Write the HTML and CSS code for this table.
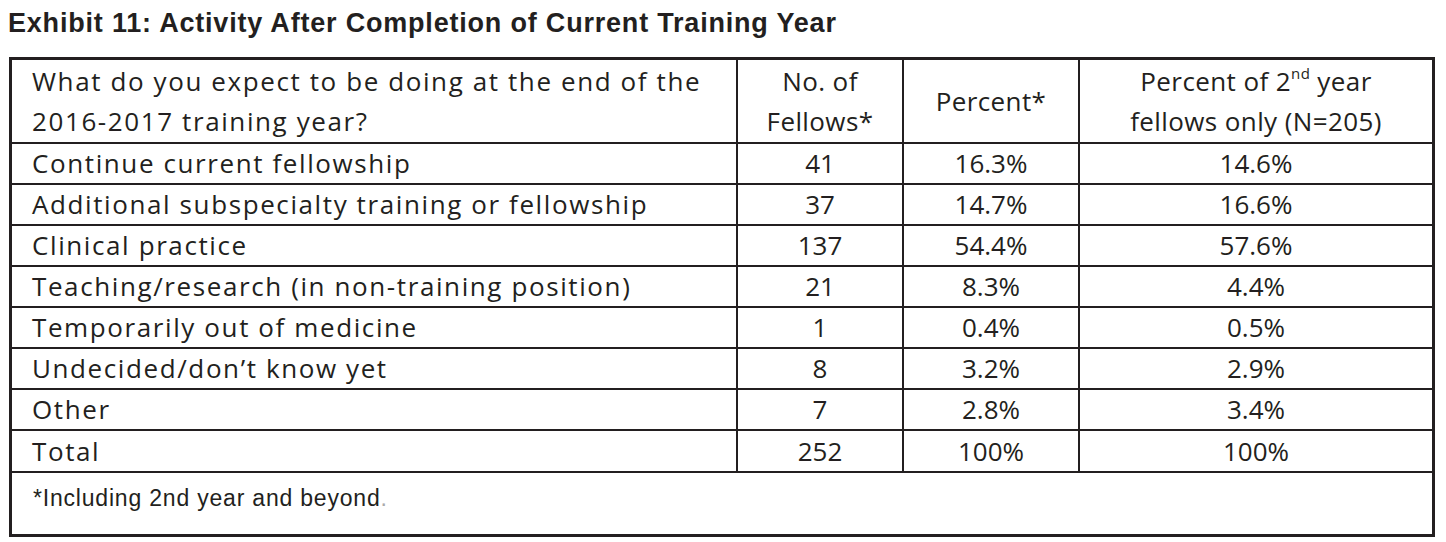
FILE: index.html
```html
<!DOCTYPE html>
<html lang="en">
<head>
	<meta charset="UTF-8">
	<title>Exhibit 11</title>
	<link rel="stylesheet" href="styles.css">
</head>
<body>
	<h1 class="title">Exhibit 11: Activity After Completion of Current Training Year</h1>
	<table class="exhibit">
		<tr class="head">
			<td class="q">What do you expect to be doing at the end of the<br>2016-2017 training year?</td>
			<td class="n">No. of<br>Fellows*</td>
			<td class="p">Percent*</td>
			<td class="p2">Percent of 2<sup>nd</sup> year<br>fellows only (N=205)</td>
		</tr>
		<tr class="row">
			<td class="q">Continue current fellowship</td>
			<td class="n">41</td>
			<td class="p">16.3%</td>
			<td class="p2">14.6%</td>
		</tr>
		<tr class="row">
			<td class="q">Additional subspecialty training or fellowship</td>
			<td class="n">37</td>
			<td class="p">14.7%</td>
			<td class="p2">16.6%</td>
		</tr>
		<tr class="row">
			<td class="q">Clinical practice</td>
			<td class="n">137</td>
			<td class="p">54.4%</td>
			<td class="p2">57.6%</td>
		</tr>
		<tr class="row">
			<td class="q">Teaching/research (in non-training position)</td>
			<td class="n">21</td>
			<td class="p">8.3%</td>
			<td class="p2">4.4%</td>
		</tr>
		<tr class="row">
			<td class="q">Temporarily out of medicine</td>
			<td class="n">1</td>
			<td class="p">0.4%</td>
			<td class="p2">0.5%</td>
		</tr>
		<tr class="row">
			<td class="q">Undecided/don’t know yet</td>
			<td class="n">8</td>
			<td class="p">3.2%</td>
			<td class="p2">2.9%</td>
		</tr>
		<tr class="row">
			<td class="q">Other</td>
			<td class="n">7</td>
			<td class="p">2.8%</td>
			<td class="p2">3.4%</td>
		</tr>
		<tr class="row total">
			<td class="q">Total</td>
			<td class="n">252</td>
			<td class="p">100%</td>
			<td class="p2">100%</td>
		</tr>
		<tr class="foot">
			<td colspan="4">*Including 2nd year and beyond<span class="dot">.</span></td>
		</tr>
	</table>
</body>
</html>
```

FILE: styles.css
```css
* {
	margin: 0;
	padding: 0;
}
body {
	background: #fff;
	color: #231f20;
	padding: 8px 0 0 8px;
}
.title {
	font-family: "Liberation Sans", Arial, sans-serif;
	font-size: 27px;
	font-weight: bold;
	line-height: 30px;
	height: 49px;
	letter-spacing: 0.8px;
}
.exhibit {
	border-collapse: collapse;
	border: 3px solid #231f20;
	width: 1426px;
	margin-left: 1px;
	font-family: "Open Sans", sans-serif;
	font-size: 26px;
	color: #231f20;
}
.exhibit td {
	border: 2px solid #231f20;
	padding: 0;
	vertical-align: middle;
}
.head {
	height: 84px;
}
.head td {
	line-height: 40px;
}
.row {
	height: 41px;
}
.total {
	height: 42px;
}
.q {
	width: 704px;
	padding-left: 20px !important;
	letter-spacing: 1.6px;
	text-align: left;
}
.n {
	width: 164px;
	text-align: center;
}
.p {
	width: 174px;
	text-align: center;
}
.p2 {
	text-align: center;
}
.head .n,
.head .p,
.head .p2 {
	letter-spacing: 0.4px;
}
sup {
	font-size: 15px;
	line-height: 0;
	vertical-align: 12px;
}
.foot {
	height: 64px;
}
.foot td {
	vertical-align: top;
	padding: 12px 0 0 21px;
	font-family: "Liberation Sans", Arial, sans-serif;
	font-size: 23px;
	line-height: 26px;
	letter-spacing: 0.8px;
}
.dot {
	color: #aaa;
}
```
